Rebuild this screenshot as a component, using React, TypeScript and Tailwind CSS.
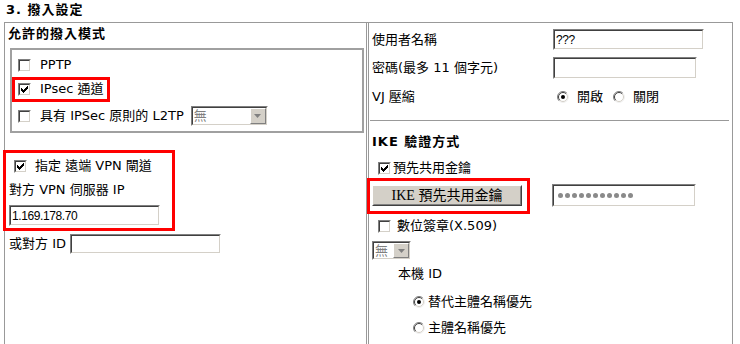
import type { ReactNode } from 'react';

// classic win2000 style form controls
const CHECK_PIXELS: [number, number, number][] = [
  [6, 0, 1],
  [5, 1, 2],
  [0, 2, 1],
  [4, 2, 3],
  [0, 3, 2],
  [3, 3, 3],
  [0, 4, 5],
  [1, 5, 3],
  [2, 6, 1],
];

function Check({ on }: { on?: boolean }) {
  return (
    <span className="inline-flex w-[13px] h-[13px] shrink-0 border border-t-[#808080] border-l-[#808080] border-b-white border-r-white">
      <span className="flex-1 flex items-center justify-center bg-white border border-t-[#404040] border-l-[#404040] border-b-[#d4d0c8] border-r-[#d4d0c8]">
        {on && (
          <svg width="7" height="7" viewBox="0 0 7 7">
            {CHECK_PIXELS.map(([x, y, w]) => (
              <rect key={`${x}-${y}`} x={x} y={y} width={w} height={1} fill="#000" />
            ))}
          </svg>
        )}
      </span>
    </span>
  );
}

function Radio({ on }: { on?: boolean }) {
  return (
    <svg width="12" height="12" viewBox="0 0 12 12" className="shrink-0">
      <circle cx="6" cy="6" r="5.5" fill="#fff" />
      <path d="M2.1 9.9 A5.5 5.5 0 0 1 9.9 2.1" fill="none" stroke="#808080" />
      <path d="M9.9 2.1 A5.5 5.5 0 0 1 2.1 9.9" fill="none" stroke="#f0f0f0" />
      <path d="M2.8 9.2 A4.5 4.5 0 0 1 9.2 2.8" fill="none" stroke="#404040" />
      <path d="M9.2 2.8 A4.5 4.5 0 0 1 2.8 9.2" fill="none" stroke="#d4d0c8" />
      {on && <circle cx="6" cy="6" r="2" fill="#000" />}
    </svg>
  );
}

function TextBox({ className, children }: { className: string; children?: ReactNode }) {
  return (
    <div className={`flex shrink-0 border border-t-[#808080] border-l-[#808080] border-b-white border-r-white ${className}`}>
      <div className="flex-1 flex items-center pl-[1px] bg-white border border-t-[#404040] border-l-[#404040] border-b-[#d4d0c8] border-r-[#d4d0c8] font-['Liberation_Sans',sans-serif] text-[12px] tracking-[-0.4px] overflow-hidden whitespace-nowrap">
        {children}
      </div>
    </div>
  );
}

function Select({ className }: { className: string }) {
  return (
    <div className={`flex shrink-0 border border-t-[#808080] border-l-[#808080] border-b-white border-r-white ${className}`}>
      <div className="flex-1 flex bg-white border border-t-[#404040] border-l-[#404040] border-b-[#d4d0c8] border-r-[#d4d0c8]">
        <div className="flex-1 pl-[1px] leading-[15px] text-[#808080]">無</div>
        <div className="w-[16px] flex items-center justify-center bg-[#d4d0c8] border border-t-white border-l-white border-b-[#808080] border-r-[#808080]">
          <svg width="7" height="4" viewBox="0 0 7 4">
            <path d="M0 0h7L3.5 4z" fill="#808080" />
          </svg>
        </div>
      </div>
    </div>
  );
}

export default function App() {
  return (
    <div className="relative w-[740px] h-[344px] overflow-hidden bg-white text-black text-[13px] font-['DejaVu_Sans','Noto_Sans_CJK_TC',sans-serif]">
      <div className="h-[22px] pl-[6px] pt-[2px] leading-[15px] font-bold tracking-[1px]">3. 撥入設定</div>

      <div className="ml-[4px] w-[729px] h-[322px] flex gap-[1px] border-t border-l border-r border-[#999]">
        {/* left cell */}
        <div className="w-[362px] flex flex-col border-r border-[#999]">
          <div className="h-[22px] pl-[3px] leading-[22px] font-bold tracking-[1px]">允許的撥入模式</div>
          <div className="ml-[5px] mt-[3px] w-[354px] h-[85px] flex flex-col pl-[6px] pt-[4px] border-2 border-[#a0a0a0]">
            <div className="h-[22px] flex items-center gap-[9px]">
              <Check />
              <span>PPTP</span>
            </div>
            <div className="h-[26px] flex items-center gap-[9px]">
              <Check on />
              <span>IPsec 通道</span>
            </div>
            <div className="h-[28px] flex items-center gap-[9px]">
              <Check />
              <span>具有 IPSec 原則的 L2TP</span>
              <Select className="-ml-[2px] w-[77px] h-[20px]" />
            </div>
          </div>

          <div className="mt-[22px] h-[22px] pl-[9px] flex items-center gap-[8px]">
            <Check on />
            <span>指定 遠端 VPN 閘道</span>
          </div>
          <div className="mt-[2px] h-[22px] pl-[4px] leading-[22px]">對方 VPN 伺服器 IP</div>
          <div className="mt-[4px] pl-[4px]">
            <TextBox className="w-[151px] h-[21px]">1.169.178.70</TextBox>
          </div>
          <div className="mt-[8px] h-[20px] pl-[4px] flex items-center">
            <span>或對方 ID</span>
            <TextBox className="ml-[4px] w-[151px] h-[20px]" />
          </div>
        </div>

        {/* right cell */}
        <div className="w-[364px] flex flex-col border-l border-[#999]">
          <div className="mt-[6px] h-[21px] flex items-center">
            <span className="w-[184px] pl-[3px]">使用者名稱</span>
            <TextBox className="w-[151px] h-[21px]">???</TextBox>
          </div>
          <div className="mt-[7px] h-[22px] flex items-center">
            <span className="w-[184px] pl-[3px]">密碼(最多 11 個字元)</span>
            <TextBox className="w-[144px] h-[22px]" />
          </div>
          <div className="mt-[8px] h-[20px] flex items-center">
            <span className="w-[184px] pl-[3px]">VJ 壓縮</span>
            <div className="pl-[4px] flex items-center">
              <Radio on />
              <span className="ml-[8px]">開啟</span>
              <span className="ml-[10px] flex"><Radio /></span>
              <span className="ml-[8px]">關閉</span>
            </div>
          </div>
          <div className="mt-[13px] ml-[1px] w-[359px] border-t border-[#999]" />

          <div className="mt-[10px] h-[22px] pl-[3px] leading-[22px] font-bold tracking-[1px]">IKE 驗證方式</div>
          <div className="mt-[4px] h-[22px] pl-[9px] flex items-center gap-[2px]">
            <Check on />
            <span>預先共用金鑰</span>
          </div>
          <div className="mt-[5px] h-[23px] pl-[3px] flex items-center">
            <div className="w-[150px] h-[21px] flex bg-[#d4d0c8] border border-t-white border-l-white border-b-[#404040] border-r-[#404040]">
              <div className="flex-1 flex items-center justify-center border border-t-[#d4d0c8] border-l-[#d4d0c8] border-b-[#808080] border-r-[#808080] font-['Liberation_Serif','Noto_Sans_CJK_TC',serif] text-[14px]">
                IKE 預先共用金鑰
              </div>
            </div>
            <TextBox className="ml-[30px] w-[144px] h-[23px]">
              <div className="pl-[3px] flex gap-[2px]">
                {Array.from({ length: 11 }).map((_, i) => (
                  <span key={i} className="w-[5px] h-[5px] rounded-full bg-[#8a8a8a]" />
                ))}
              </div>
            </TextBox>
          </div>
          <div className="mt-[8px] h-[22px] pl-[9px] flex items-center gap-[6px]">
            <Check />
            <span>數位簽章(X.509)</span>
          </div>
          <div className="mt-[4px] pl-[3px]">
            <Select className="w-[39px] h-[19px]" />
          </div>
          <div className="mt-[3px] h-[22px] pl-[29px] leading-[22px]">本機 ID</div>
          <div className="mt-[6px] h-[22px] pl-[44px] flex items-center gap-[3px]">
            <Radio on />
            <span>替代主體名稱優先</span>
          </div>
          <div className="mt-[4px] h-[22px] pl-[44px] flex items-center gap-[3px]">
            <Radio />
            <span>主體名稱優先</span>
          </div>
        </div>
      </div>

      {/* red highlight boxes drawn over the form */}
      <div className="absolute left-[12px] top-[77px] w-[98px] h-[25px] border-[3px] border-[#f00]" />
      <div className="absolute left-[3px] top-[150px] w-[172px] h-[81px] border-[3px] border-[#f00]" />
      <div className="absolute left-[367px] top-[178px] w-[163px] h-[36px] border-[3px] border-[#f00]" />
    </div>
  );
}
